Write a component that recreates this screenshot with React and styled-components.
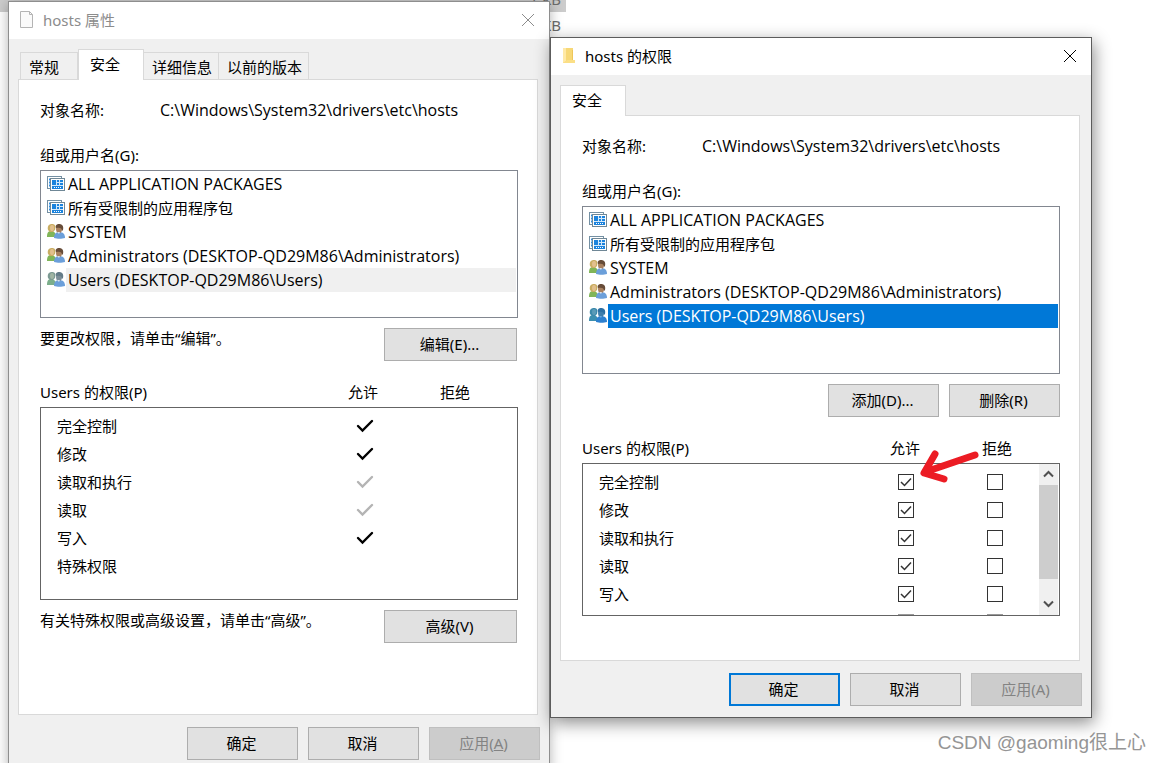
import React from 'react';
import styled, { createGlobalStyle, css } from 'styled-components';

const GlobalStyle = createGlobalStyle`
  * {
    box-sizing: border-box;
  }
  body {
    margin: 0;
    background: #fff;
    color: #000;
    font: 15px/20px "Noto Sans", "Noto Sans CJK SC", sans-serif;
  }
`;

const groups = [
  { icon: 'package', name: 'ALL APPLICATION PACKAGES', latin: true },
  { icon: 'package', name: '所有受限制的应用程序包' },
  { icon: 'users', name: 'SYSTEM', latin: true },
  { icon: 'users', name: 'Administrators (DESKTOP-QD29M86\\Administrators)', latin: true },
  { icon: 'users', name: 'Users (DESKTOP-QD29M86\\Users)', latin: true, selected: true },
];

const permissions = [
  { name: '完全控制', mark: 'on' },
  { name: '修改', mark: 'on' },
  { name: '读取和执行', mark: 'inherited' },
  { name: '读取', mark: 'inherited' },
  { name: '写入', mark: 'on' },
];

// icons *******************************************************

function PackageIcon() {
  return (
    <svg width="18" height="18" viewBox="0 0 18 18" aria-hidden="true">
      <rect x="0.5" y="1.5" width="14" height="12" fill="#fff" stroke="#7490a3" />
      <path d="M2 4.500h1M2 7.500h1M2 10.500h1" stroke="#2f8ee0" strokeWidth="2" />
      <rect x="3.500" y="3.500" width="14" height="12" fill="#fff" stroke="#6f8796" />
      <rect x="5" y="5" width="11" height="9" fill="#1b83dd" />
      <path d="M9.500 5v5M12.500 5v5M9 7.500h7M5 10.500h11" stroke="#d3e9fb" />
      <path d="M7 12.500h8" stroke="#fff" strokeDasharray="1 1" />
    </svg>
  );
}

function UsersIcon({ tint }) {
  const blue = tint === 'blue';
  const grey = tint === 'grey';
  const hair = blue ? '#3b89ab' : grey ? '#7c9a93' : '#c9ad62';
  const face = blue ? '#5b9bb8' : grey ? '#a1b5a4' : '#e2c08e';
  const coat = blue ? '#3c8fb0' : grey ? '#7bae8b' : '#80b558';
  const dark = blue ? '#2c6fa3' : grey ? '#637b88' : '#674c38';
  const skin = blue ? '#3f7eac' : grey ? '#7c8e98' : '#a8805f';
  const shirt = blue ? '#2d80cf' : '#6b9fda';
  return (
    <svg width="18" height="18" viewBox="0 0 18 18" aria-hidden="true">
      <path d="M0 14c0-4 1-6 4-6 3 0 5 2 5 6z" fill={coat} />
      <path d="M1 7C0 3 2 1 5 1c3 0 4 2 3 6L6 9H3z" fill={hair} />
      <ellipse cx="5" cy="5" rx="2" ry="3" fill={face} />
      <path d="M7 15c0-4 2-6 5-6 4 0 6 2 6 6-3 1-8 1-11 0z" fill={shirt} />
      <ellipse cx="12" cy="6" rx="3" ry="4" fill={skin} />
      <path d="M9 5c-1-3 1-4 3-4 3 0 5 2 4 6l-1 1c0-3-2-4-6-3z" fill={dark} />
      <path d="M10 9l2 2 1-2z" fill={blue ? '#6ba6dc' : '#d5e2ee'} />
    </svg>
  );
}

function FileIcon() {
  return (
    <svg width="16" height="20" viewBox="0 0 16 20" aria-hidden="true">
      <path d="M1.500 1.500h9l3 3v13h-12z" fill="#fafafa" stroke="#b4b4b4" />
      <path d="M10.500 1.500v3h3" fill="none" stroke="#b4b4b4" />
    </svg>
  );
}

function FolderIcon() {
  return (
    <svg width="16" height="20" viewBox="0 0 16 20" aria-hidden="true">
      <path d="M2 2h10v12h2v3H2z" fill="#f7d877" />
      <path d="M2 2h3v13l-3 2z" fill="#ffe9a6" />
      <path d="M11 4h1v10h-1z" fill="#eec65a" />
      <path d="M2 17l4-3h8v3z" fill="#fbdf86" />
    </svg>
  );
}

function CloseIcon() {
  return (
    <svg width="14" height="14" viewBox="0 0 14 14" aria-hidden="true">
      <path d="M1 1l12 12M13 1L1 13" stroke="currentColor" fill="none" />
    </svg>
  );
}

function Mark({ type }) {
  return (
    <svg width="18" height="14" viewBox="0 0 18 14" role="img" aria-label="允许">
      <path
        d="M2 7l4.500 4.500L16 2"
        fill="none"
        stroke={type === 'on' ? '#000' : '#b4b4b4'}
        strokeWidth="2.400"
        strokeLinecap="round"
      />
    </svg>
  );
}

function Chevron({ up }) {
  return (
    <svg width="11" height="8" viewBox="0 0 11 8" aria-hidden="true">
      <path d={up ? 'M1 6.500l4.500-4.500L10 6.500' : 'M1 1.500L5.500 6 10 1.500'} fill="none" stroke="#505050" strokeWidth="2" />
    </svg>
  );
}

// desktop *******************************************************

const Desktop = styled.main`
  position: relative;
  height: 100vh;
  overflow: hidden;
`;

const FileList = styled.div`
  width: 566px;
  color: #6d6d6d;
`;

const FileRow = styled.div`
  display: flex;
  justify-content: flex-end;
  height: 26px;
  padding-right: 5px;
  line-height: 26px;
  background: ${(p) => (p.$selected ? '#ccc' : 'transparent')};
  margin-top: ${(p) => (p.$selected ? '-14px' : '0')};
`;

const Watermark = styled.div`
  position: absolute;
  right: 16px;
  bottom: 6px;
  color: #959595;
  font: 19px/28px "Liberation Sans", "Noto Sans CJK SC", sans-serif;
`;

const Arrow = styled.svg`
  position: absolute;
  left: 367px;
  top: 411px;
`;

// dialog *******************************************************

const Window = styled.section`
  position: absolute;
  left: ${(p) => p.$x}px;
  top: ${(p) => p.$y}px;
  width: 542px;
  background: #f0f0f0;
  border: 1px solid ${(p) => (p.$active ? '#5c5c5c' : '#8e8e8e')};
  box-shadow: ${(p) => (p.$active ? '2px 5px 16px rgba(0, 0, 0, 0.45)' : '0 2px 12px rgba(0, 0, 0, 0.3)')};
`;

const TitleBar = styled.header`
  display: flex;
  align-items: center;
  gap: 8px;
  height: 37px;
  padding: 0 14px 2px 10px;
  background: #fff;
  color: ${(p) => (p.$active ? '#000' : '#8c8c8c')};
`;

const Title = styled.h1`
  flex: 1;
  margin: 0;
  font-size: 15px;
  font-weight: 400;
`;

const CloseButton = styled.button`
  display: flex;
  padding: 0;
  border: 0;
  background: none;
  color: inherit;
`;

const Content = styled.div`
  padding: 10px 11px 11px 9px;
`;

const Tabs = styled.div`
  display: flex;
  align-items: flex-end;
  height: 31px;
  padding-left: ${(p) => (p.$inset ? '2px' : '0')};
  margin-bottom: -1px;
`;

const Tab = styled.button`
  height: 28px;
  padding: 2px 6px 0 8px;
  border: 1px solid #d9d9d9;
  border-left-width: ${(p) => (p.$first ? '1px' : '0')};
  background: #f0f0f0;
  color: #000;
  font: inherit;
  text-align: left;
  ${(p) =>
    p.$first &&
    css`
      width: 58px;
    `}
  ${(p) =>
    p.$active &&
    css`
      position: relative;
      width: 66px;
      height: 31px;
      padding: 0 0 2px 11px;
      border-left-width: 1px;
      border-bottom: 0;
      background: #fff;
    `}
`;

const Panel = styled.div`
  height: ${(p) => p.$height}px;
  padding: 20px 19px 0 21px;
  border: 1px solid #d9d9d9;
  background: #fff;
`;

const ObjectName = styled.div`
  display: grid;
  grid-template-columns: 120px 1fr;
  margin-bottom: 25px;
`;

const Path = styled.span`
  font-family: "Open Sans", sans-serif;
  font-size: 16px;
`;

const Label = styled.div`
  margin-bottom: 5px;
`;

const GroupList = styled.ul`
  height: ${(p) => p.$height}px;
  margin: 0;
  padding: 1px 1px 0 6px;
  border: 1px solid #828790;
  list-style: none;
`;

const GroupRow = styled.li`
  display: flex;
  align-items: center;
  gap: 1px;
  height: 24px;
`;

const GroupName = styled.span`
  flex: 1;
  height: 24px;
  padding-left: 2px;
  line-height: 24px;
  background: ${(p) => p.$fill};
  color: ${(p) => (p.$fill === '#0078d7' ? '#fff' : '#000')};
  ${(p) =>
    p.$latin &&
    css`
      font-family: "Open Sans", sans-serif;
      font-size: 16px;
    `}
`;

const Hint = styled.div`
  display: flex;
  justify-content: space-between;
  margin: 10px 1px 0 0;
`;

const ButtonBar = styled.div`
  display: flex;
  justify-content: flex-end;
  gap: 10px;
  margin-top: ${(p) => p.$top}px;
  margin-right: ${(p) => (p.$edge ? '-2px' : '0')};
`;

const Button = styled.button`
  width: ${(p) => (p.$wide ? '133px' : '111px')};
  height: 33px;
  padding: 0 2px 2px 0;
  border: ${(p) => (p.$primary ? '2px solid #0078d7' : '1px solid #adadad')};
  background: #e1e1e1;
  color: #000;
  font: inherit;
  &:disabled {
    border-color: #bfbfbf;
    background: #ccc;
    color: #838383;
  }
`;

const PermHead = styled.div`
  display: grid;
  grid-template-columns: 1fr 92px 78px;
  margin-top: 21px;
  margin-bottom: 5px;
`;

const PermBox = styled.div`
  display: flex;
  height: ${(p) => p.$height}px;
  border: 1px solid #646464;
  overflow: hidden;
`;

const PermTable = styled.table`
  flex: 1;
  align-self: flex-start;
  margin-top: 4px;
  border-collapse: collapse;
  table-layout: fixed;
  th {
    height: 28px;
    padding: 0 0 0 16px;
    font-weight: 400;
    text-align: left;
  }
  td {
    width: 90px;
    height: 28px;
    padding: 0;
    text-align: center;
  }
  td:last-child {
    width: ${(p) => (p.$scroll ? '88px' : '107px')};
  }
  svg {
    display: block;
    margin: 0 auto;
  }
`;

const Check = styled.input`
  appearance: none;
  display: block;
  width: 16px;
  height: 16px;
  margin: 0 auto;
  border: 1px solid #333;
  background: #fff;
  &:disabled {
    border-color: #999;
  }
`;

const CheckCell = styled.label`
  display: grid;
  > * {
    grid-area: 1 / 1;
    place-self: center;
  }
  svg {
    pointer-events: none;
    z-index: 1;
  }
`;

const ScrollBar = styled.div`
  display: flex;
  flex-direction: column;
  align-items: center;
  justify-content: space-between;
  width: 19px;
  margin-right: 1px;
  padding: 6px 0 7px;
  background: #f0f0f0;
`;

const Thumb = styled.div`
  width: 19px;
  height: 94px;
  margin-bottom: 14px;
  background: #cdcdcd;
`;

function CheckBox({ label, checked, disabled }) {
  const [on, setOn] = React.useState(checked);
  return (
    <CheckCell>
      <Check type="checkbox" aria-label={label} checked={on} disabled={disabled} onChange={() => setOn(!on)} />
      {on && (
        <svg width="12" height="10" viewBox="0 0 12 10" aria-hidden="true">
          <path d="M1 5l3.500 3.500L11 1.500" fill="none" stroke="#333" strokeWidth="1.500" />
        </svg>
      )}
    </CheckCell>
  );
}

function Groups({ height, active }) {
  return (
    <>
      <ObjectName>
        <span>对象名称:</span>
        <Path>C:\Windows\System32\drivers\etc\hosts</Path>
      </ObjectName>
      <Label>组或用户名(G):</Label>
      <GroupList $height={height}>
        {groups.map((g) => (
          <GroupRow key={g.name}>
            {g.icon === 'package' ? (
              <PackageIcon />
            ) : (
              <UsersIcon tint={g.selected ? (active ? 'blue' : 'grey') : ''} />
            )}
            <GroupName $latin={g.latin} $fill={g.selected ? (active ? '#0078d7' : '#f0f0f0') : 'transparent'}>
              {g.name}
            </GroupName>
          </GroupRow>
        ))}
      </GroupList>
    </>
  );
}

function Permissions({ height, editable }) {
  return (
    <>
      <PermHead>
        <span>Users 的权限(P)</span>
        <span>允许</span>
        <span>拒绝</span>
      </PermHead>
      <PermBox $height={height}>
        <PermTable $scroll={editable}>
          <tbody>
            {permissions.map((p) => (
              <tr key={p.name}>
                <th scope="row">{p.name}</th>
                <td>
                  {editable ? <CheckBox label={p.name + ' 允许'} checked /> : <Mark type={p.mark} />}
                </td>
                <td>{editable && <CheckBox label={p.name + ' 拒绝'} checked={false} />}</td>
              </tr>
            ))}
            {editable ? (
              <tr>
                <th scope="row" aria-label="特殊权限" />
                <td><CheckBox label="特殊权限 允许" checked={false} disabled /></td>
                <td><CheckBox label="特殊权限 拒绝" checked={false} disabled /></td>
              </tr>
            ) : (
              <tr>
                <th scope="row">特殊权限</th>
                <td />
                <td />
              </tr>
            )}
          </tbody>
        </PermTable>
        {editable && (
          <ScrollBar>
            <Chevron up />
            <Thumb />
            <Chevron />
          </ScrollBar>
        )}
      </PermBox>
    </>
  );
}

function PropertiesWindow() {
  return (
    <Window $x={8} $y={1}>
      <TitleBar>
        <FileIcon />
        <Title>hosts 属性</Title>
        <CloseButton aria-label="关闭"><CloseIcon /></CloseButton>
      </TitleBar>
      <Content>
        <Tabs $inset>
          <Tab $first>常规</Tab>
          <Tab $active>安全</Tab>
          <Tab>详细信息</Tab>
          <Tab>以前的版本</Tab>
        </Tabs>
        <Panel $height={636}>
          <Groups height={148} />
          <Hint>
            <span>要更改权限，请单击“编辑”。</span>
            <Button $wide>编辑(E)...</Button>
          </Hint>
          <Permissions height={193} />
          <Hint>
            <span>有关特殊权限或高级设置，请单击“高级”。</span>
            <Button $wide>高级(V)</Button>
          </Hint>
        </Panel>
        <ButtonBar $top={12} $edge>
          <Button>确定</Button>
          <Button>取消</Button>
          <Button disabled>应用(<u>A</u>)</Button>
        </ButtonBar>
      </Content>
    </Window>
  );
}

function PermissionsWindow() {
  return (
    <Window $x={550} $y={37} $active>
      <TitleBar $active>
        <FolderIcon />
        <Title>hosts 的权限</Title>
        <CloseButton aria-label="关闭"><CloseIcon /></CloseButton>
      </TitleBar>
      <Content>
        <Tabs>
          <Tab $active>安全</Tab>
        </Tabs>
        <Panel $height={546}>
          <Groups height={168} active />
          <ButtonBar $top={10}>
            <Button>添加(D)...</Button>
            <Button>删除(R)</Button>
          </ButtonBar>
          <Permissions height={153} editable />
        </Panel>
        <ButtonBar $top={12} $edge>
          <Button $primary>确定</Button>
          <Button>取消</Button>
          <Button disabled>应用(A)</Button>
        </ButtonBar>
      </Content>
      <Arrow width="64" height="36" viewBox="0 0 64 36" aria-hidden="true">
        <path
          d="M57 6L10 22M17 5L6 24L26 30"
          fill="none"
          stroke="#ec1c24"
          strokeWidth="7"
          strokeLinecap="round"
          strokeLinejoin="round"
        />
      </Arrow>
    </Window>
  );
}

const App = () => {
  return (
    <Desktop>
      <GlobalStyle />
      <FileList>
        <FileRow $selected>1 KB</FileRow>
        <FileRow>4 KB</FileRow>
      </FileList>
      <PropertiesWindow />
      <PermissionsWindow />
      <Watermark>CSDN @gaoming很上心</Watermark>
    </Desktop>
  );
};

export default App;
